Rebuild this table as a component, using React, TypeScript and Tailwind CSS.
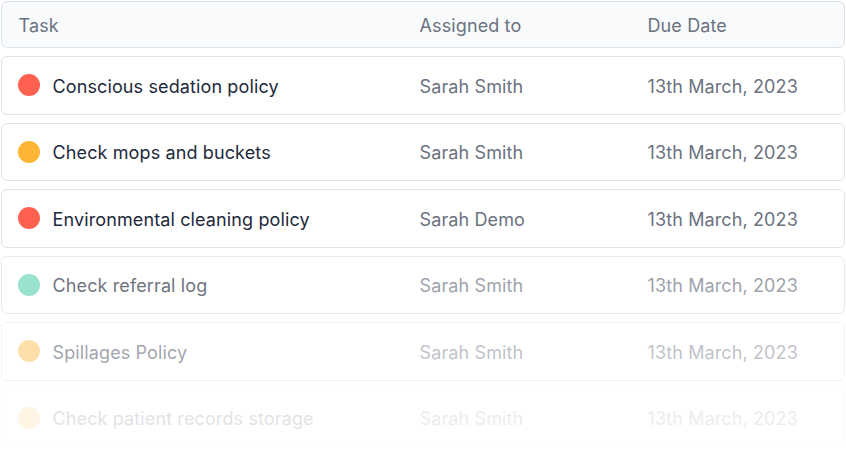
const ROWS = [
  { task: "Conscious sedation policy", who: "Sarah Smith", due: "13th March, 2023", dot: "bg-[#ff6150]", fade: "opacity-100" },
  { task: "Check mops and buckets", who: "Sarah Smith", due: "13th March, 2023", dot: "bg-[#ffb534]", fade: "opacity-100" },
  { task: "Environmental cleaning policy", who: "Sarah Demo", due: "13th March, 2023", dot: "bg-[#ff6150]", fade: "opacity-100" },
  { task: "Check referral log", who: "Sarah Smith", due: "13th March, 2023", dot: "bg-[#64d4b5]", fade: "opacity-[0.65]" },
  { task: "Spillages Policy", who: "Sarah Smith", due: "13th March, 2023", dot: "bg-[#ffb534]", fade: "opacity-[0.42]" },
  { task: "Check patient records storage", who: "Sarah Smith", due: "13th March, 2023", dot: "bg-[#ffb534]", fade: "opacity-[0.13]" },
];

export default function App() {
  return (
    <div
      className="h-[458px] w-[846px] overflow-hidden bg-white pl-px pt-px tracking-[0.12px]"
      style={{ fontFamily: "Inter, 'Noto Sans', sans-serif" }}
    >
      <div className="flex w-[844px] flex-col gap-2">
        {/* Header */}
        <div className="flex h-[47px] items-center rounded-md border-[1.5px] border-[#dde3ea] bg-[#f8fafc] pl-[16.5px] pt-[2px] text-[18px] text-[#6b7280]">
          <span className="w-[401px]">Task</span>
          <span className="w-[228px]">Assigned to</span>
          <span>Due Date</span>
        </div>

        {ROWS.map((r) => (
          <div
            key={r.task}
            className={`flex h-[58.5px] items-center rounded-md border-[1.5px] border-[#dde3ea] bg-white pl-[15.5px] text-[18px] ${r.fade}`}
          >
            <div className="flex w-[402px] items-center gap-[13px]">
              <span className={`h-[22px] w-[22px] shrink-0 rounded-full ${r.dot}`} />
              <span className="pt-[2px] text-[#1e293b]">{r.task}</span>
            </div>
            <span className="w-[228px] pt-[2px] text-[#6b7280]">{r.who}</span>
            <span className="pt-[2px] text-[#6b7280]">{r.due}</span>
          </div>
        ))}
      </div>
    </div>
  );
}
